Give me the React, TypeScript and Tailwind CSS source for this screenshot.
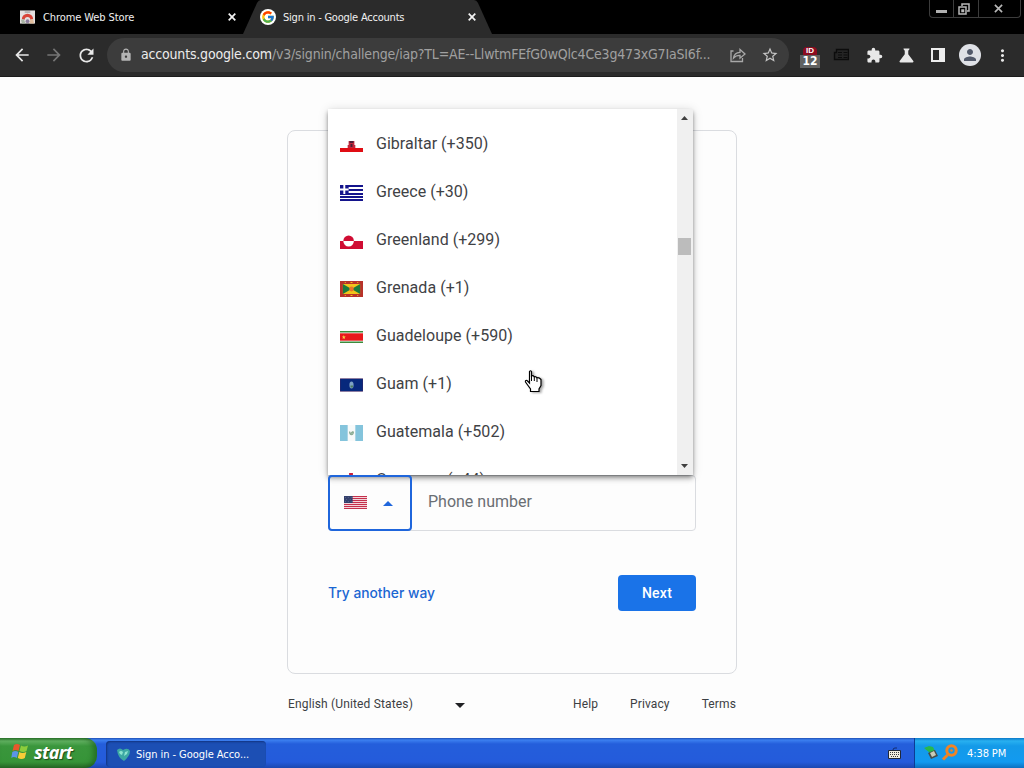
import type { ReactNode } from "react";
import { FcGoogle } from "react-icons/fc";
import {
  MdArrowBack,
  MdArrowForward,
  MdExtension,
  MdLock,
  MdMoreVert,
  MdPerson,
  MdRefresh,
  MdScience,
  MdStarBorder
} from "react-icons/md";

const uiFont = "font-['DejaVu_Sans_Condensed','DejaVu_Sans',sans-serif] [font-stretch:condensed]";

const flags: Record<string, ReactNode> = {
  gi: (
    <>
      <path fill="#fff" d="M0 0h24v16H0z" />
      <path fill="#e00d14" d="M0 11h24v4H0z" />
      <path fill="#c4283c" d="M8 8h8v3H8zM9 4h6v4H9z" />
      <path fill="#4a2038" d="M10 4h4v2h-4zM11 7h2v3h-2z" />
    </>
  ),
  gr: (
    <>
      <path fill="#fff" d="M0 0h24v16H0z" />
      <path fill="#14148c" d="M0 0h24v2H0zM0 4h24v2H0zM0 8h24v2H0zM0 11h24v2H0zM0 14h24v2H0zM0 0h9v9H0z" />
      <path fill="#fff" d="M3.500 0h2v9h-2zM0 3.500h9v2H0z" />
    </>
  ),
  gl: (
    <>
      <path fill="#fff" d="M0 0h24v16H0z" />
      <path fill="#d00c33" d="M0 8h24v8H0z" />
      <path fill="#d00c33" d="M3.500 8a5.500 5.500 0 0 1 11 0z" />
      <path fill="#fff" d="M3.500 8a5.500 5.500 0 0 0 11 0z" />
    </>
  ),
  gd: (
    <>
      <path fill="#b8322a" d="M0 0h24v16H0z" />
      <path fill="#f2c31c" d="M3 3h18v10H3z" />
      <path fill="#1c7a3c" d="M3 3l9 5-9 5zM21 3l-9 5 9 5z" />
      <circle cx="12" cy="8" r="2.400" fill="#e8742a" />
      <path fill="#f2c31c" d="M5 1h1v1H5zM11 1h2v1h-2zM18 1h1v1h-1zM5 14h1v1H5zM11 14h2v1h-2zM18 14h1v1h-1z" />
    </>
  ),
  gp: (
    <>
      <path fill="#fff" d="M0 2h24v12H0z" />
      <path fill="#3c8c3c" d="M0 2h24v1.500H0zM0 12.500h24V14H0z" />
      <path fill="#e8191c" d="M0 4.300h24v7.400H0z" />
      <path fill="#f8d048" d="M4 6l.6 1.400 1.400.1-1.100 1 .4 1.500L4 9.200 2.700 10l.4-1.500-1.100-1 1.400-.1z" />
    </>
  ),
  gu: (
    <>
      <path fill="#5c2858" d="M0 1.500h24v13H0z" />
      <path fill="#07287c" d="M.3 1.800h23.400v12.400H.3z" />
      <ellipse cx="12" cy="8" rx="2.200" ry="3.500" fill="#7fa4c4" />
      <path fill="#4c7c5c" d="M11 8.500h2.500v2H11z" />
    </>
  ),
  gt: (
    <>
      <path fill="#f8fafa" d="M0 0h24v16H0z" />
      <path fill="#84c4dc" d="M0 0h8v16H0zM16 0h8v16h-8z" />
      <path fill="none" stroke="#8cac94" strokeWidth="1.300" d="M10 6.500q0 3 2 3t2-3M10.500 9l3-2.500" />
    </>
  ),
  gg: (
    <>
      <path fill="#fff" d="M0 0h24v16H0z" />
      <path fill="#c8203c" d="M9.500 0h4v16h-4zM0 6h24v4H0z" />
    </>
  ),
  us: (
    <>
      <path fill="#f4d4da" d="M0 2h24v13H0z" />
      <path fill="#c4304c" d="M0 2h24v1H0zM0 4h24v1H0zM0 6h24v1H0zM0 8h24v1H0zM0 10h24v1H0zM0 12h24v1H0zM0 14h24v1H0z" />
      <path fill="#34406c" d="M0 2h9v7H0z" />
      <path fill="#5c648c" d="M1 3h1v1H1zM4 3h1v1H4zM7 3h1v1H7zM2 5h1v1H2zM6 5h1v1H6zM1 7h1v1H1zM4 7h1v1H4zM7 7h1v1H7z" />
    </>
  )
};

const countries = [
  { code: "gi", label: "Gibraltar (+350)" },
  { code: "gr", label: "Greece (+30)" },
  { code: "gl", label: "Greenland (+299)" },
  { code: "gd", label: "Grenada (+1)" },
  { code: "gp", label: "Guadeloupe (+590)" },
  { code: "gu", label: "Guam (+1)" },
  { code: "gt", label: "Guatemala (+502)" },
  { code: "gg", label: "Guernsey (+44)" }
];

function Flag({ code }: { code: string }) {
  return (
    <svg width="23" height="16" viewBox="0 0 24 16" preserveAspectRatio="none" className="shrink-0">
      {flags[code]}
    </svg>
  );
}

function CloseMark() {
  return (
    <svg width="8" height="8" viewBox="0 0 8 8" className="shrink-0">
      <path d="M.7.7l6.600 6.600M7.300.7L.7 7.300" stroke="#f4f4f4" strokeWidth="1.700" />
    </svg>
  );
}

function WebStoreIcon() {
  return (
    <svg width="15" height="14" viewBox="0 0 16 14" className="mr-px shrink-0">
      <path fill="#e4e0e0" d="M0 0h16v14H0z" />
      <path fill="#a4a4a4" d="M5 1h6v1.500H5z" />
      <path fill="#d84438" d="M2 9a6 5.500 0 0 1 12 0l-3 1a3 3 0 0 0-6 0z" />
      <path fill="#a8b4a4" d="M1 10l3-1 2 5H2z" />
      <path fill="#e0bc9c" d="M11 10l3-1 1 5h-5z" />
      <circle cx="8" cy="11.500" r="2" fill="#8c7c9c" />
    </svg>
  );
}

function TabStrip() {
  return (
    <div className={`relative flex h-[34px] bg-black text-[11px] text-[#f1f1f1] ${uiFont}`}>
      <div className="flex w-[243px] items-center pl-5 pr-[7px]">
        <WebStoreIcon />
        <span className="ml-[7px] mt-[3px] flex-1 whitespace-nowrap tracking-[-0.1px]">Chrome Web Store</span>
        <CloseMark />
      </div>
      <div className="relative flex w-[253px] items-center pl-[17px] pr-5">
        <svg width="253" height="34" viewBox="0 0 253 34" className="absolute left-0 top-0">
          <path fill="#2b2b2b" d="M0 34 14 3q1.500-3 4-3h213q2.500 0 4 3l14 31z" />
        </svg>
        <span className="relative flex h-4 w-4 items-center justify-center rounded-full bg-white">
          <FcGoogle size={14} />
        </span>
        <span className="relative ml-[7px] mt-[3px] flex-1 whitespace-nowrap tracking-[-0.22px]">Sign in - Google Accounts</span>
        <span className="relative">
          <CloseMark />
        </span>
      </div>
      <div className="absolute right-[3px] top-0 flex h-[18px] rounded-b-sm border border-t-0 border-[#3c3c3c]">
        <span className="flex w-6 items-center justify-center border-r border-[#3c3c3c]">
          <svg width="11" height="10" viewBox="0 0 11 10">
            <path fill="#b0b0b0" d="M0 6h11v3H0z" />
          </svg>
        </span>
        <span className="flex w-[25px] items-center justify-center border-r border-[#3c3c3c] pr-1">
          <svg width="12" height="12" viewBox="0 0 12 12" fill="none" stroke="#b8b8b8" strokeWidth="1.500">
            <path d="M4 3V1h7v7H9" />
            <path d="M1 4h7v7H1z" />
            <path d="M4 7h1.500v1.500H4z" />
          </svg>
        </span>
        <span className="flex w-[41px] items-center justify-center pr-0.5">
          <svg width="9" height="9" viewBox="0 0 10 9">
            <path d="M1 .5l8 8M9 .5l-8 8" stroke="#b8b8b8" strokeWidth="1.800" />
          </svg>
        </span>
      </div>
    </div>
  );
}

function Toolbar() {
  return (
    <div className="flex h-[43px] items-center border-b border-[#1c1c1c] bg-[#2b2b2b] text-[#e8e8e8]">
      <div className="flex w-[107px] items-center pl-3">
        <MdArrowBack size={20} />
        <MdArrowForward size={20} className="ml-3 text-[#757575]" />
        <MdRefresh size={21} className="ml-3" />
      </div>
      <div className="flex h-[34px] w-[682px] items-center rounded-full bg-[#3c3c3c] pl-3">
        <MdLock size={14} className="text-[#b4b4b4]" />
        <span className={`-mt-0.5 ml-2 w-[576px] whitespace-nowrap text-[14px] tracking-[-0.18px] text-[#a0a0a0] ${uiFont}`}>
          <span className="text-[#ececec]">accounts.google.com</span>
          /v3/signin/challenge/iap?TL=AE--LlwtmFEfG0wQlc4Ce3g473xG7IaSI6f...
        </span>
        <svg width="16" height="16" viewBox="0 0 16 16" fill="none" stroke="#a8a8a8" strokeWidth="1.300" className="ml-[13px]">
          <path d="M3.500 4H1v10.500h11.500V11" />
          <path d="M3.500 11c.4-3.500 2.600-5.500 6.500-5.700V2.500l5 4.500-5 4.200V8.300C7 8.300 5 9.200 3.500 11z" />
        </svg>
        <MdStarBorder size={18} className="ml-[15px] text-[#c4c4c4]" />
      </div>
      <div className="ml-[11px] flex h-6 w-5 flex-col items-center pt-1">
        <div className="h-2 w-3.5 rounded-t-sm bg-[#8c0c20] text-center font-['Liberation_Sans',sans-serif] text-[8px] font-bold leading-[8px] text-white">
          ID
        </div>
        <div className={`h-[13px] w-full bg-[#616161] text-center text-[12px] font-bold leading-[13px] text-white ${uiFont}`}>12</div>
      </div>
      <svg width="16" height="14" viewBox="0 0 16 14" className="ml-[13px]">
        <path d="M3.500 1.500h12v10h-14v-7h2z" fill="#242424" stroke="#0c0c0c" strokeWidth="1.400" />
        <path d="M5 4.500h4M5 7h4M5 9.500h4M10.500 4.500h4M10.500 7h4M10.500 9.500h4" stroke="#0c0c0c" />
      </svg>
      <MdExtension size={17} className="ml-[17px]" />
      <MdScience size={21} className="ml-[13px]" />
      <svg width="14" height="14" viewBox="0 0 14 14" className="ml-[14px]">
        <path fill="#ededed" fillRule="evenodd" d="M0 0h14v14H0zM2 2v10h6V2z" />
      </svg>
      <span className="ml-[14px] flex h-[22px] w-[22px] items-center justify-center rounded-full bg-[#dfe1e6] text-[#52596a]">
        <MdPerson size={18} />
      </span>
      <MdMoreVert size={19} className="ml-3" />
    </div>
  );
}

function CountryMenu() {
  return (
    <div className="absolute -left-px bottom-[55px] z-10 flex h-[366px] w-[365px] overflow-hidden bg-white shadow-[0_2px_4px_-1px_rgba(0,0,0,0.4),0_4px_5px_rgba(0,0,0,0.2),0_1px_10px_rgba(0,0,0,0.14)]">
      <ul className="flex-1 pt-[11px]">
        {countries.map((country) => (
          <li key={country.code} className="flex h-12 items-center pl-3 text-base tracking-[0.030px] text-[#3f4245]">
            <span className="mr-[13px] mt-[2px]">
              <Flag code={country.code} />
            </span>
            <span className="-mt-px">{country.label}</span>
          </li>
        ))}
      </ul>
      <div className="flex w-4 flex-col items-center bg-[#f0f0f0] pr-px pt-[7px] pb-[7px]">
        <svg width="7" height="4" viewBox="0 0 7 4">
          <path fill="#404040" d="M0 4l3.500-4L7 4z" />
        </svg>
        <div className="mt-[118px] h-[17px] w-[13px] bg-[#bcbcbc]" />
        <svg width="7" height="4" viewBox="0 0 7 4" className="mt-auto">
          <path fill="#404040" d="M0 0h7L3.500 4z" />
        </svg>
      </div>
    </div>
  );
}

function SignInCard() {
  return (
    <div className="flex h-[544px] w-[450px] flex-col rounded-lg border border-[#dadce0] px-10 pt-[344px]">
      <div className="relative flex h-14 w-[368px] rounded border border-[#dadce0]">
        <div className="relative z-20 -m-px flex w-[84px] items-center rounded border-2 border-[#1f66dc] pl-[14px] pb-0.5">
          <Flag code="us" />
          <svg width="10" height="5" viewBox="0 0 10 5" className="ml-4 mt-[3px]">
            <path fill="#1f66dc" d="M0 5l5-5 5 5z" />
          </svg>
        </div>
        <span className="ml-[17px] mt-[14px] text-base leading-6 text-[#6a6e73]">Phone number</span>
        <CountryMenu />
      </div>
      <div className="mt-11 flex w-[368px] items-center justify-between text-sm font-medium">
        <span className="mt-0.5 font-['Inter','Roboto',sans-serif] text-[13.800px] text-[#1a66d2]">Try another way</span>
        <button className="h-9 w-[78px] rounded bg-[#1a73e8] tracking-[0.25px] text-white">Next</button>
      </div>
    </div>
  );
}

function Taskbar() {
  return (
    <div className={`flex h-[30px] bg-[linear-gradient(to_bottom,#1f4fb4_0,#3c80f0_2px,#245edb_6px,#245bdb_24px,#1b48b0_30px)] text-[11px] text-white ${uiFont}`}>
      <div className="flex w-[97px] items-center rounded-r-xl bg-[linear-gradient(to_bottom,#2f7a2f_0,#62b262_3px,#3a963c_8px,#369438_24px,#286c28_30px)] pl-[11px] shadow-[inset_-4px_0_5px_rgba(20,80,20,0.5)]">
        <svg width="18" height="17" viewBox="0 0 18 17" className="-mt-1">
          <path fill="#e8582c" d="M3 2q3-2 6 0L7.500 8q-3-2-6 0z" />
          <path fill="#8ccc3c" d="M10 2.500q3 2 7 0L15.500 8q-3 2-7 0z" />
          <path fill="#5c94e8" d="M1.300 9q3-2 6 0l-1.500 6q-3-2-5.500 0z" />
          <path fill="#f8cc38" d="M8.300 9q3 2 7 0l-1.500 6q-3 2-7 0z" />
        </svg>
        <span className="-mt-0.5 ml-[5px] font-['Noto_Sans',sans-serif] text-[18px] font-bold italic leading-none [font-stretch:normal] tracking-[-0.6px] [text-shadow:1px_1px_1px_#1a4a1a]">
          start
        </span>
      </div>
      <div className="ml-[9px] mt-[3px] flex h-[26px] w-40 items-center rounded-sm bg-[#1c4fb4] pl-[10px] shadow-[inset_1px_1px_2px_#123480]">
        <svg width="15" height="15" viewBox="0 0 15 15">
          <path fill="#3ca8a4" d="M1 3q3-3 6 0 5-3 7 1 0 5-6 10Q2 11 1 3z" />
          <path fill="#8ce4d0" d="M3 5q2-2 4 0L6 8 4 7zM9 5l3-1-1 3-3 2z" />
        </svg>
        <span className="ml-[5px] mt-0.5 whitespace-nowrap tracking-[-0.050px]">Sign in - Google Acco...</span>
      </div>
      <div className="ml-auto flex items-center pr-[13px]">
        <svg width="13" height="12" viewBox="0 0 13 12">
          <path d="M5 3q0-2 2-2h2" fill="none" stroke="#122c70" />
          <path fill="#f0ece0" stroke="#202838" d="M.5 3.500h12v8H.5z" />
          <path d="M2 5.500h9M2 7.500h9M3 9.500h7" stroke="#38383c" strokeDasharray="1 1" />
        </svg>
      </div>
      <div className="flex w-[110px] items-center border-l border-[#0c3c94] bg-[linear-gradient(to_bottom,#0c78c8_0,#28b0f0_3px,#149ae8_8px,#129af0_24px,#0c70c0_30px)] pl-[9px]">
        <svg width="15" height="15" viewBox="0 0 15 15" className="-mt-0.5">
          <path fill="#28b84c" d="M0 3l5-2 4 1 2 4-5 2z" />
          <path fill="#484c48" d="M4 8l7-3 3 6-7 3z" />
          <path fill="#c8ccb8" d="M6 8l4-2 2 4-4 2z" />
        </svg>
        <svg width="17" height="17" viewBox="0 0 17 17" fill="none" stroke="#f08424" className="-mt-0.5 ml-[2px]">
          <circle cx="10.500" cy="6.500" r="4.700" strokeWidth="3" />
          <circle cx="10.500" cy="6.500" r="1.300" fill="#f08424" stroke="none" />
          <path d="M6.500 11L2 15.500" strokeWidth="3" />
        </svg>
        <span className="ml-[9px] mt-0.5 whitespace-nowrap tracking-[-0.1px]">4:38 PM</span>
      </div>
    </div>
  );
}

function HandPointer() {
  return (
    <svg width="20" height="24" viewBox="0 0 20 24" className="absolute left-[524px] top-[370px] z-20 drop-shadow-[2px_1px_1px_rgba(0,0,0,0.35)]">
      <path
        d="M5.500 1.500q1-1.500 2 0V6q1.500-1 2.800.8 1.500-.8 2.700 1 2-.7 4 1.700v6L15 19v2.500H6.500V19L4 15.500 1.500 12q-.5-2 1.500-1.500l2.500 2.500z"
        fill="#fff"
        stroke="#000"
        strokeWidth="1.200"
      />
      <path d="M7.500 6v5M10.300 7v4M13 8v4" stroke="#000" />
    </svg>
  );
}

export default function App() {
  return (
    <div className="relative flex h-[768px] w-[1024px] flex-col overflow-hidden bg-[#fdfdfd] font-['Roboto',sans-serif]">
      <TabStrip />
      <Toolbar />
      <main className="flex flex-1 flex-col pl-[287px] pt-[53px]">
        <SignInCard />
        <div className="mt-[22px] flex w-[449px] items-center pl-px text-xs leading-4 text-[#3c4043]">
          <span className="tracking-[0.15px]">English (United States)</span>
          <svg width="10" height="5" viewBox="0 0 10 5" className="ml-[42px] mt-[3px]">
            <path fill="#202124" d="M0 0h10L5 5z" />
          </svg>
          <div className="ml-auto flex gap-8 tracking-[0.12px]">
            <span>Help</span>
            <span>Privacy</span>
            <span>Terms</span>
          </div>
        </div>
      </main>
      <Taskbar />
      <HandPointer />
    </div>
  );
}
